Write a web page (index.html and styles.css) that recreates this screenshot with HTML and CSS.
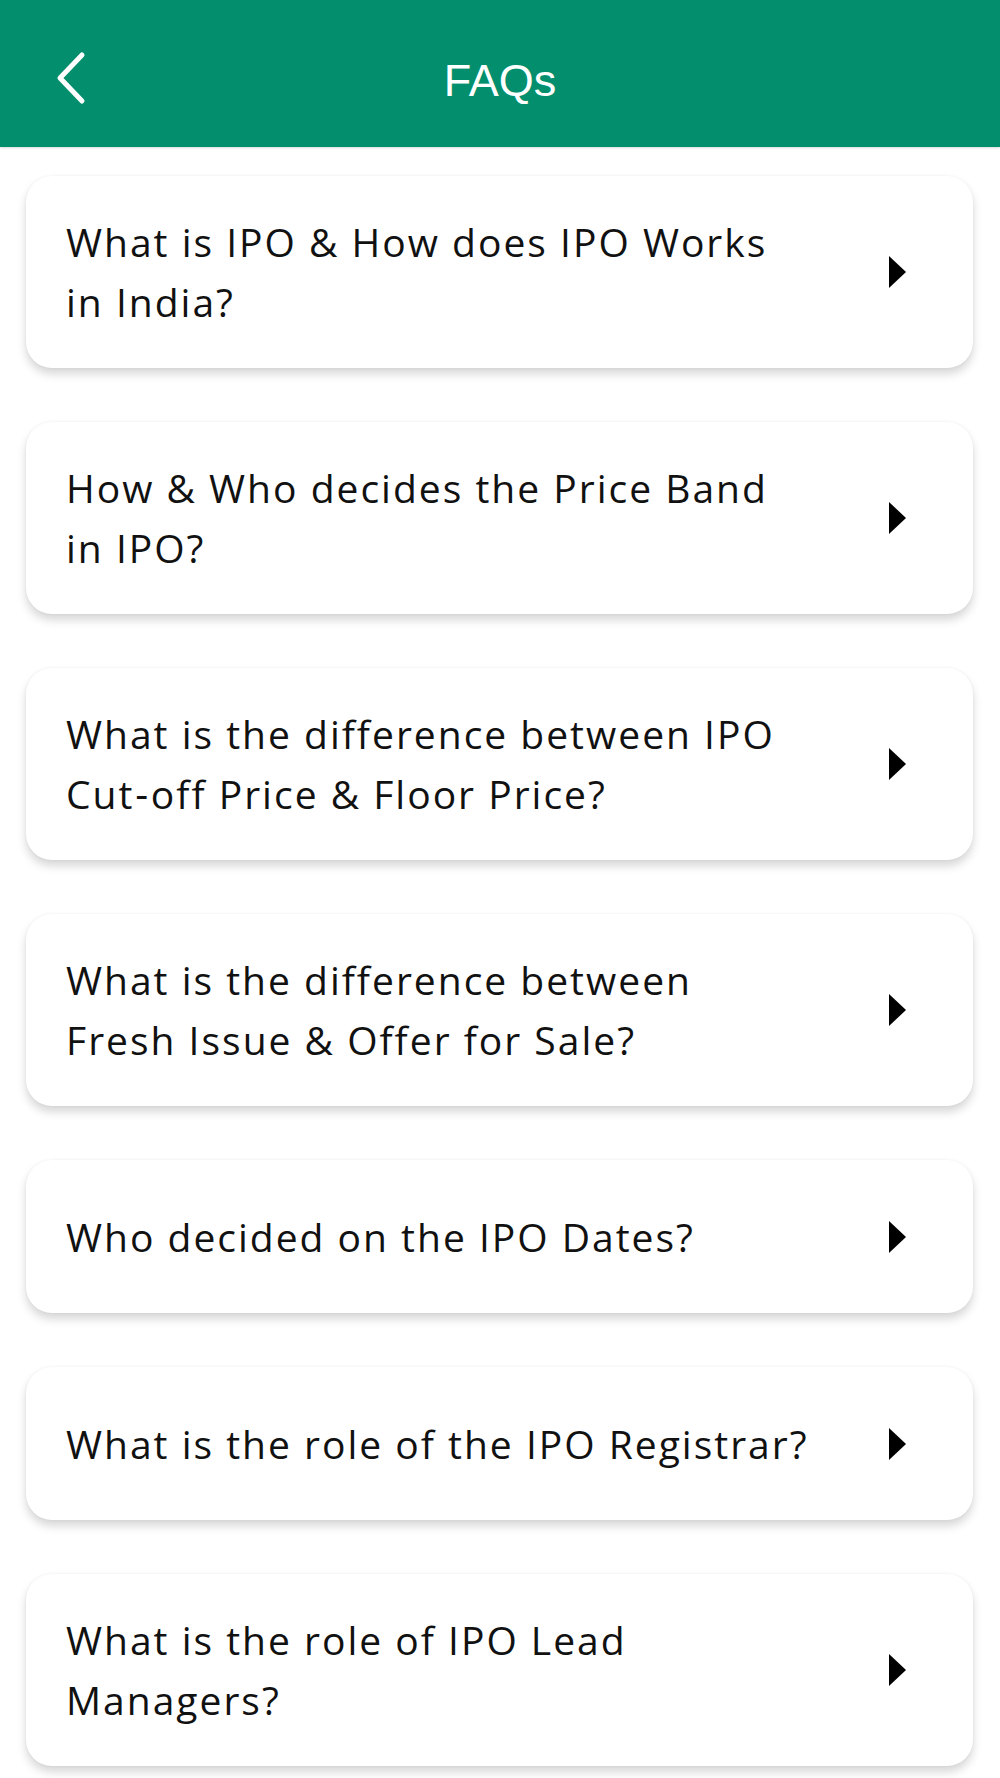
FILE: index.html
```html
<!DOCTYPE html>
<html lang="en">
<head>
    <meta charset="UTF-8">
    <meta name="viewport" content="width=device-width, initial-scale=1.0">
    <title>FAQs</title>
    <link rel="stylesheet" href="styles.css">
</head>
<body>
    <header class="topbar">
        <a class="back" href="#">
            <svg width="34" height="54" viewBox="0 0 34 54">
                <path d="M27 4 L5 27 L27 50" fill="none" stroke="#fff" stroke-width="5" stroke-linecap="round" stroke-linejoin="round"/>
            </svg>
        </a>
        <h1>FAQs</h1>
    </header>

    <section class="faq-list">
        <div class="faq">
            <p>What is IPO &amp; How does IPO Works in India?</p>
            <span class="arrow"></span>
        </div>
        <div class="faq">
            <p>How &amp; Who decides the Price Band in IPO?</p>
            <span class="arrow"></span>
        </div>
        <div class="faq">
            <p>What is the difference between IPO Cut&#8209;off Price &amp; Floor Price?</p>
            <span class="arrow"></span>
        </div>
        <div class="faq">
            <p>What is the difference between Fresh Issue &amp; Offer for Sale?</p>
            <span class="arrow"></span>
        </div>
        <div class="faq">
            <p>Who decided on the IPO Dates?</p>
            <span class="arrow"></span>
        </div>
        <div class="faq">
            <p>What is the role of the IPO Registrar?</p>
            <span class="arrow"></span>
        </div>
        <div class="faq">
            <p>What is the role of IPO Lead Managers?</p>
            <span class="arrow"></span>
        </div>
    </section>
</body>
</html>
```

FILE: styles.css
```css
body{
    margin: 0;
    background: #fff;
    font-family: "Open Sans", Lato, sans-serif;
    color: #111;
}
.topbar{
    position: relative;
    height: 147px;
    background: #038f6d;
    display: flex;
    align-items: center;
    justify-content: center;
    box-shadow: 0 1px 2px rgba(0,0,0,0.15);
}
.topbar h1{
    margin: 0;
    padding-top: 14px;
    color: #fff;
    font-family: "Liberation Sans", Arial, sans-serif;
    font-weight: 400;
    font-size: 45px;
}
.back{
    position: absolute;
    left: 55px;
    top: 51px;
    display: block;
}
.faq-list{
    padding: 29px 27px 12px 26px;
    display: flex;
    flex-direction: column;
    gap: 54px;
}
.faq{
    box-sizing: border-box;
    min-height: 153px;
    padding: 36px 67px 36px 40px;
    background: #fff;
    border-radius: 26px;
    box-shadow: 0 6px 10px rgba(0,0,0,0.16), 0 0 3px rgba(0,0,0,0.05);
    display: flex;
    align-items: center;
    justify-content: space-between;
}
.faq p{
    margin: 0;
    max-width: 745px;
    font-size: 39px;
    line-height: 60px;
    letter-spacing: 2px;
}
.arrow{
    width: 0;
    height: 0;
    border-top: 16px solid transparent;
    border-bottom: 16px solid transparent;
    border-left: 17px solid #000;
    flex-shrink: 0;
}
```
